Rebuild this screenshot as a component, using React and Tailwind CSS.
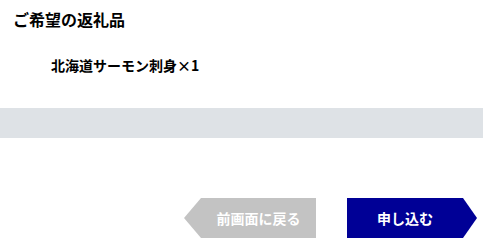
const font = { fontFamily: '"Noto Sans CJK JP", "Noto Sans", sans-serif' };

export default function App() {
  return (
    <div className="w-[483px] h-[243px] bg-white text-black" style={font}>
      {/* heading */}
      <div className="pl-[13px] pt-[9px] h-[48px]">
        <h2 className="text-[16px] font-bold leading-[20px]">ご希望の返礼品</h2>
      </div>

      {/* selected item */}
      <div className="pl-[51px] h-[60px] pt-[7px]">
        <p className="text-[14px] font-bold leading-[20px]">北海道サーモン刺身×1</p>
      </div>

      {/* band */}
      <div className="h-[30px] bg-[#dee2e6]"></div>

      {/* buttons */}
      <div className="flex justify-end gap-[31px] pr-[6px] pt-[60px]">
        <button className="w-[132px] h-[40px] bg-[#c3c3c3] text-white text-[14px] font-bold pl-[17px] [clip-path:polygon(17px_0,100%_0,100%_100%,17px_100%,0_50%)]">
          前画面に戻る
        </button>
        <button className="w-[130px] h-[40px] bg-[#000096] text-white text-[14px] font-bold pr-[14px] [clip-path:polygon(0_0,calc(100%-14px)_0,100%_50%,calc(100%-14px)_100%,0_100%)]">
          申し込む
        </button>
      </div>
    </div>
  );
}
